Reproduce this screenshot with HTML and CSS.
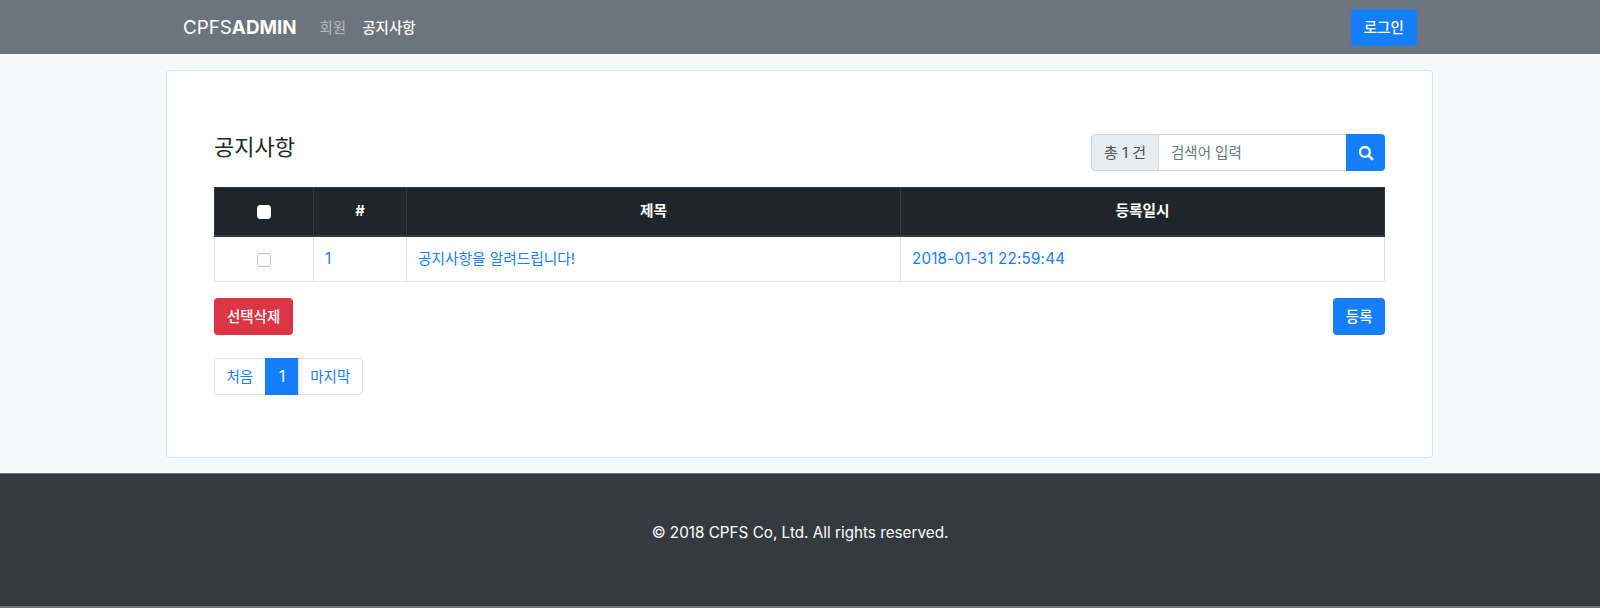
FILE: index.html
```html
<!DOCTYPE html>
<html lang="ko">
<head>
<meta charset="utf-8">
<title>CPFS Admin</title>
<link rel="stylesheet" href="styles.css">
</head>
<body>
<nav class="navbar">
  <div class="nav-left">
    <a class="brand">CPFS<b>ADMIN</b></a>
    <a class="nav-link muted">회원</a>
    <a class="nav-link active">공지사항</a>
  </div>
  <button class="btn btn-primary btn-login">로그인</button>
</nav>
<main class="page">
  <section class="card">
    <div class="head">
      <h1 class="title">공지사항</h1>
      <form class="search">
        <span class="addon">총 1 건</span>
        <input class="search-input" type="text" placeholder="검색어 입력">
        <button class="search-btn" type="button" aria-label="검색">
          <svg width="16" height="16" viewBox="0 0 16 16" fill="none" stroke="#fff"><circle cx="6.9" cy="6.9" r="4.9" stroke-width="2.3"/><path d="M10.6 10.6 14.2 14.2" stroke-width="2.6" stroke-linecap="round"/></svg>
        </button>
      </form>
    </div>
    <table class="table">
      <colgroup><col class="c1"><col class="c2"><col class="c3"><col class="c4"></colgroup>
      <thead>
        <tr>
          <th><span class="check check-head"></span></th>
          <th>#</th>
          <th>제목</th>
          <th>등록일시</th>
        </tr>
      </thead>
      <tbody>
        <tr>
          <td class="center"><span class="check"></span></td>
          <td><a class="link latin">1</a></td>
          <td><a class="link">공지사항을 알려드립니다!</a></td>
          <td><a class="link latin">2018-01-31 22:59:44</a></td>
        </tr>
      </tbody>
    </table>
    <div class="actions">
      <button class="btn btn-danger">선택삭제</button>
      <button class="btn btn-primary btn-add">등록</button>
    </div>
    <ul class="pagination">
      <li class="page-item">처음</li>
      <li class="page-item current">1</li>
      <li class="page-item">마지막</li>
    </ul>
  </section>
</main>
<footer class="footer">© 2018 CPFS Co, Ltd. All rights reserved.</footer>
</body>
</html>
```
FILE: styles.css
```css
* { box-sizing: border-box; }
html, body { margin: 0; height: 608px; overflow: hidden; }
body {
  font-family: Inter, "Noto Sans CJK KR", sans-serif;
  font-size: 15px;
  line-height: 24px;
  color: #212529;
  background: #f8f9fa;
  display: flex;
  flex-direction: column;
}
.navbar {
  height: 54px;
  padding: 0 183px;
  background: #6c757d;
  display: flex;
  align-items: center;
  justify-content: space-between;
}
.nav-left { display: flex; align-items: center; padding-top: 2px; }
.brand { font-size: 18.8px; color: #fff; margin-right: 23px; }
.brand b { font-weight: 700; }
.nav-link { margin-right: 16px; font-size: 14.5px; }
.muted { color: rgba(255,255,255,.5); }
.active { color: #fff; font-weight: 500; }
.btn {
  border: 0;
  border-radius: 4px;
  height: 37px;
  padding: 0 13px;
  font: inherit;
  font-size: 14.5px;
  font-weight: 500;
  color: #fff;
}
.btn-login { padding: 1px 13.2px 0; }
.btn-add { padding: 0 12.5px; }
.btn-primary { background: #157efb; }
.btn-danger { background: #dc3545; }
.page { height: 419px; padding: 16px 166px; }
.card {
  width: 1267px;
  height: 388px;
  padding: 63px 47px 0;
  background: #fff;
  border: 1px solid #dee2e6;
  border-radius: 4px;
}
.head { display: flex; justify-content: space-between; height: 53px; }
.title { margin: 0; font-size: 22px; font-weight: 400; line-height: 26px; }
.search { display: flex; height: 37px; width: 294px; }
.addon {
  width: 68px;
  background: #e9ecef;
  border: 1px solid #ced4da;
  border-radius: 4px 0 0 4px;
  text-align: center;
  line-height: 35px;
  color: #495057;
  font-size: 15px;
}
.search-input {
  flex: 1;
  min-width: 0;
  border: 1px solid #ced4da;
  border-left: 0;
  border-right: 0;
  padding: 0 12px;
  font: inherit;
  font-size: 14.5px;
  outline: 0;
}
.search-input::placeholder { color: #6c757d; opacity: 1; }
.search-btn {
  width: 39px;
  border: 0;
  padding: 0;
  background: #157efb;
  border-radius: 0 4px 4px 0;
  display: flex;
  align-items: center;
  justify-content: center;
}
.table {
  width: 100%;
  table-layout: fixed;
  border-collapse: collapse;
  font-size: 14.7px;
}
.c1 { width: 99px; }
.c2 { width: 93px; }
.c3 { width: 494px; }
th {
  height: 48px;
  padding: 0 12px;
  background: #212529;
  color: #fff;
  font-weight: 700;
  text-align: center;
  border: 1px solid #32383e;
  border-bottom-width: 2px;
}
td {
  height: 46px;
  padding: 0 11px;
  border: 1px solid #dee2e6;
}
.center { text-align: center; }
.link { color: #157efb; }
.latin { font-size: 15.2px; letter-spacing: .2px; }
.check {
  display: inline-block;
  width: 14px;
  height: 14px;
  vertical-align: middle;
  border: 1px solid #c4c4c4;
  border-radius: 3px;
  background: #fff;
}
.check-head { border-color: #fff; }
.actions { display: flex; justify-content: space-between; margin-top: 16px; }
.pagination {
  display: flex;
  width: max-content;
  margin: 23px 0 0;
  padding: 0;
  list-style: none;
  font-size: 14.5px;
  line-height: 35px;
  color: #157efb;
}
.page-item {
  height: 37px;
  padding: 0 12px;
  border: 1px solid #dee2e6;
  margin-left: -1px;
  background: #fff;
}
.page-item:first-child { margin-left: 0; border-radius: 4px 0 0 4px; padding: 0 11.5px; }
.page-item:last-child { border-radius: 0 4px 4px 0; padding: 0 12px 0 11px; }
.current { background: #157efb; border-color: #157efb; color: #fff; font-size: 16px; padding: 0 13px; }
.footer {
  flex: 1;
  padding-top: 47px;
  background: #343a40;
  border-top: 1px solid #6f7478;
  border-bottom: 2px solid #6f7478;
  color: #fff;
  text-align: center;
  font-size: 15.25px;
}
```
